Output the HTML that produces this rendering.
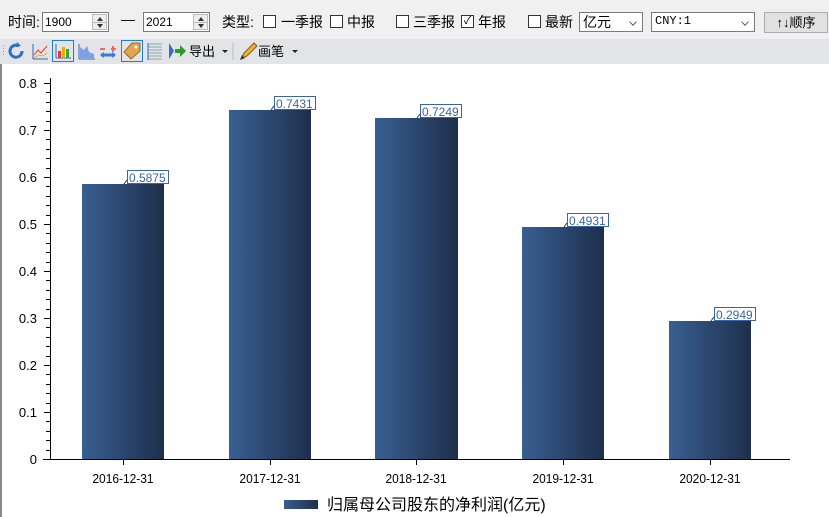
<!DOCTYPE html>
<html><head><meta charset="utf-8"><style>
*{margin:0;padding:0;box-sizing:border-box}
body{width:829px;height:517px;overflow:hidden;background:#fff;font-family:"Liberation Sans","Noto Sans CJK SC",sans-serif;font-size:13px;color:#000;position:relative}
.a{position:absolute;white-space:nowrap}
.tb1{position:absolute;left:0;top:0;width:829px;height:39px;background:#f0f0f0}
.tb2{position:absolute;left:0;top:39px;width:829px;height:25px;background:#e3e4e8}
.inp{position:absolute;height:20px;border:1px solid #7a7a7a;background:#fff;font-size:12px;padding:2px 2px;font-family:"Liberation Sans",sans-serif}
.spin{position:absolute;right:1px;top:1px;width:15px;height:16px;border:1px solid #bbb;background:#eee}
.spin:before{content:"";position:absolute;left:4px;top:2px;border:3px solid transparent;border-bottom:4px solid #333;border-top:0}
.spin:after{content:"";position:absolute;left:4px;top:9px;border:3px solid transparent;border-top:4px solid #333;border-bottom:0}
.spin i{position:absolute;left:0;top:7px;width:13px;height:1px;background:#bbb}
.cb{position:absolute;width:13px;height:13px;border:1px solid #333;background:#fff}
.sel{position:absolute;height:20px;border:1px solid #7a7a7a;background:#fff;font-size:12px;padding:1px 3px}
.chev{position:absolute;right:6px;top:6px;width:6px;height:6px;border-right:1px solid #555;border-bottom:1px solid #555;transform:rotate(45deg) scale(0.9)}
</style></head><body>
<div class="tb1"></div>
<div class="tb2"></div>
<div class="a" style="left:0;top:64px;width:2px;height:453px;background:#888"></div>
<div class="a" style="left:8px;top:12px;font-size:14px">时间:</div>
<div class="inp" style="left:42px;top:12px;width:67px">1900<div class="spin"><i></i></div></div>
<div class="a" style="left:121px;top:11px;font-size:14px">—</div>
<div class="inp" style="left:143px;top:12px;width:67px">2021<div class="spin"><i></i></div></div>
<div class="a" style="left:222px;top:12px;font-size:14px">类型:</div>
<div class="cb" style="left:263px;top:15px"></div><div class="a" style="left:281px;top:12px;font-size:14px">一季报</div>
<div class="cb" style="left:330px;top:15px"></div><div class="a" style="left:347px;top:12px;font-size:14px">中报</div>
<div class="cb" style="left:396px;top:15px"></div><div class="a" style="left:413px;top:12px;font-size:14px">三季报</div>
<div class="cb" style="left:461px;top:15px;font-size:11px;line-height:11px;text-align:center">✓</div><div class="a" style="left:478px;top:12px;font-size:14px">年报</div>
<div class="cb" style="left:528px;top:15px"></div><div class="a" style="left:545px;top:12px;font-size:14px">最新</div>
<div class="sel" style="left:579px;top:12px;width:64px;font-size:14px;line-height:16px">亿元<span class="chev"></span></div>
<div class="sel" style="left:651px;top:12px;width:104px;font-family:'Liberation Mono',monospace">CNY:1<span class="chev"></span></div>
<div class="a" style="left:764px;top:12px;width:64px;height:21px;border:1px solid #adadad;background:#e1e1e1;font-size:13px;text-align:center;line-height:19px">↑↓顺序</div>
<svg class="a" style="left:0;top:39px" width="310" height="25">
<g fill="#999"><rect x="3" y="6" width="1" height="1"/><rect x="3" y="9" width="1" height="1"/><rect x="3" y="12" width="1" height="1"/><rect x="3" y="15" width="1" height="1"/></g>
<path d="M22 12 a6 6 0 1 1 -3 -5" stroke="#2f6ec6" stroke-width="3" fill="none"/><path d="M17 3 l4 4 -5 1z" fill="#2f6ec6"/>
<path d="M33 20 V5 M33 20 H48" stroke="#2a6ebd"/><path d="M34 16 l4-5 3 3 6-7" stroke="#e33" fill="none"/><path d="M34 19 l5-3 4 1 4-3" stroke="#ea0" fill="none"/>
<rect x="52.5" y="1.5" width="21" height="21" fill="none" stroke="#1d7fd1"/><path d="M56 19H71M56 19V5" stroke="#2a6ebd"/><rect x="58" y="12" width="3" height="7" fill="#e33"/><rect x="62" y="8" width="3" height="11" fill="#ea0"/><rect x="66" y="10" width="3" height="9" fill="#3a3"/>
<path d="M79 20V5M79 20H95" stroke="#2a6ebd"/><path d="M80 19V8l4 3 3 -4 2 6 5 2v4z" fill="#7da0e6"/>
<path d="M100 10h5M111 10h5M113 7v6" stroke="#e66" stroke-width="2"/><path d="M101 16h14" stroke="#3a7bd5" stroke-width="3"/><path d="M100 16l4-3v6zM116 16l-4-3v6z" fill="#3a7bd5"/>
<rect x="121.5" y="1.5" width="21" height="21" fill="none" stroke="#1d7fd1"/><path d="M124 13l8-9 8 0 0 8-9 8z" fill="#e0a550" stroke="#9a6a25"/><circle cx="136" cy="8" r="1.5" fill="#fff"/>
<path d="M148 5h14M148 8h14M148 11h14M148 14h14M148 17h14M148 20h14" stroke="#8aa" /><path d="M148 4v17" stroke="#36c"/>
<path d="M169 4v16l5-8z" fill="#2f6ec6"/><path d="M175 10h5v-4l6 6-6 6v-4h-5z" fill="#2a9a2a"/>
<text x="189" y="17" font-size="13" font-family="Noto Sans CJK SC,sans-serif">导出</text>
<path d="M222 11h6l-3 3z" fill="#222"/>
<path d="M233 4v17" stroke="#bbb"/>
<path d="M241 20l3-6 10-10 3 3-10 10z" fill="#f0b040" stroke="#8a5a10"/><path d="M240 21l2-5 3 3z" fill="#333"/>
<text x="258" y="17" font-size="13" font-family="Noto Sans CJK SC,sans-serif">画笔</text>
<path d="M292 11h6l-3 3z" fill="#222"/>
</svg>
<svg class="a" style="left:0;top:0" width="829" height="517">
<defs><linearGradient id="g" x1="0" x2="1"><stop offset="0" stop-color="#385f92"/><stop offset="1" stop-color="#1e2f4c"/></linearGradient></defs>
<g font-family="Liberation Sans,sans-serif" font-size="13" fill="#000" text-anchor="end">
<text x="37" y="88">0.8</text><text x="37" y="135">0.7</text><text x="37" y="182">0.6</text><text x="37" y="229">0.5</text><text x="37" y="276">0.4</text><text x="37" y="323">0.3</text><text x="37" y="370">0.2</text><text x="37" y="417">0.1</text><text x="37" y="464">0</text>
</g>
<path d="M50.5 78V459" stroke="#000"/>
<path d="M43 459.5H790" stroke="#000"/>
<g fill="url(#g)">
<rect x="82" y="184" width="82" height="275"/><rect x="229" y="110" width="82" height="349"/><rect x="375" y="118" width="83" height="341"/><rect x="522" y="227" width="82" height="232"/><rect x="669" y="321" width="82" height="138"/>
</g>
<g stroke="#000"><path d="M123.5 460v5M270.5 460v5M416.5 460v5M563.5 460v5M710.5 460v5"/></g>
<g font-family="Liberation Sans,sans-serif" font-size="13" text-anchor="middle"><g transform="scale(0.92,1)"><text x="133.7" y="483">2016-12-31</text><text x="293.5" y="483">2017-12-31</text><text x="452.2" y="483">2018-12-31</text><text x="612" y="483">2019-12-31</text><text x="771.7" y="483">2020-12-31</text></g></g>
<g font-family="Liberation Sans,sans-serif" font-size="12" fill="#3a64a8">
<rect x="127.5" y="170.5" width="41" height="13" fill="#fff" stroke="#3a64a8"/><text x="129" y="182">0.5875</text><path d="M124 184l3-4" stroke="#333"/>
<rect x="274.5" y="96.5" width="41" height="13" fill="#fff" stroke="#3a64a8"/><text x="276" y="108">0.7431</text><path d="M271 110l3-4" stroke="#333"/>
<rect x="420.5" y="104.5" width="41" height="13" fill="#fff" stroke="#3a64a8"/><text x="422" y="116">0.7249</text><path d="M417 118l3-4" stroke="#333"/>
<rect x="567.5" y="213.5" width="41" height="13" fill="#fff" stroke="#3a64a8"/><text x="569" y="225">0.4931</text><path d="M564 227l3-4" stroke="#333"/>
<rect x="714.5" y="307.5" width="41" height="13" fill="#fff" stroke="#3a64a8"/><text x="716" y="319">0.2949</text><path d="M711 321l3-4" stroke="#333"/>
</g>
<rect x="284" y="500" width="34" height="9" fill="url(#g)"/>
<text x="327" y="510" font-size="16" font-family="Liberation Sans,Noto Sans CJK SC,sans-serif">归属母公司股东的净利润(亿元)</text>
<path id="ticks" stroke="#000" d=""/>
</svg>
<script>
(function(){var d="";for(var i=0;i<=40;i++){var y=Math.round(459-i*9.4)+0.5;var l=(i%5==0)?6:4;d+="M"+(50-l)+" "+y+"H50";}
document.getElementById("ticks").setAttribute("d",d);})();
</script>
</body></html>
